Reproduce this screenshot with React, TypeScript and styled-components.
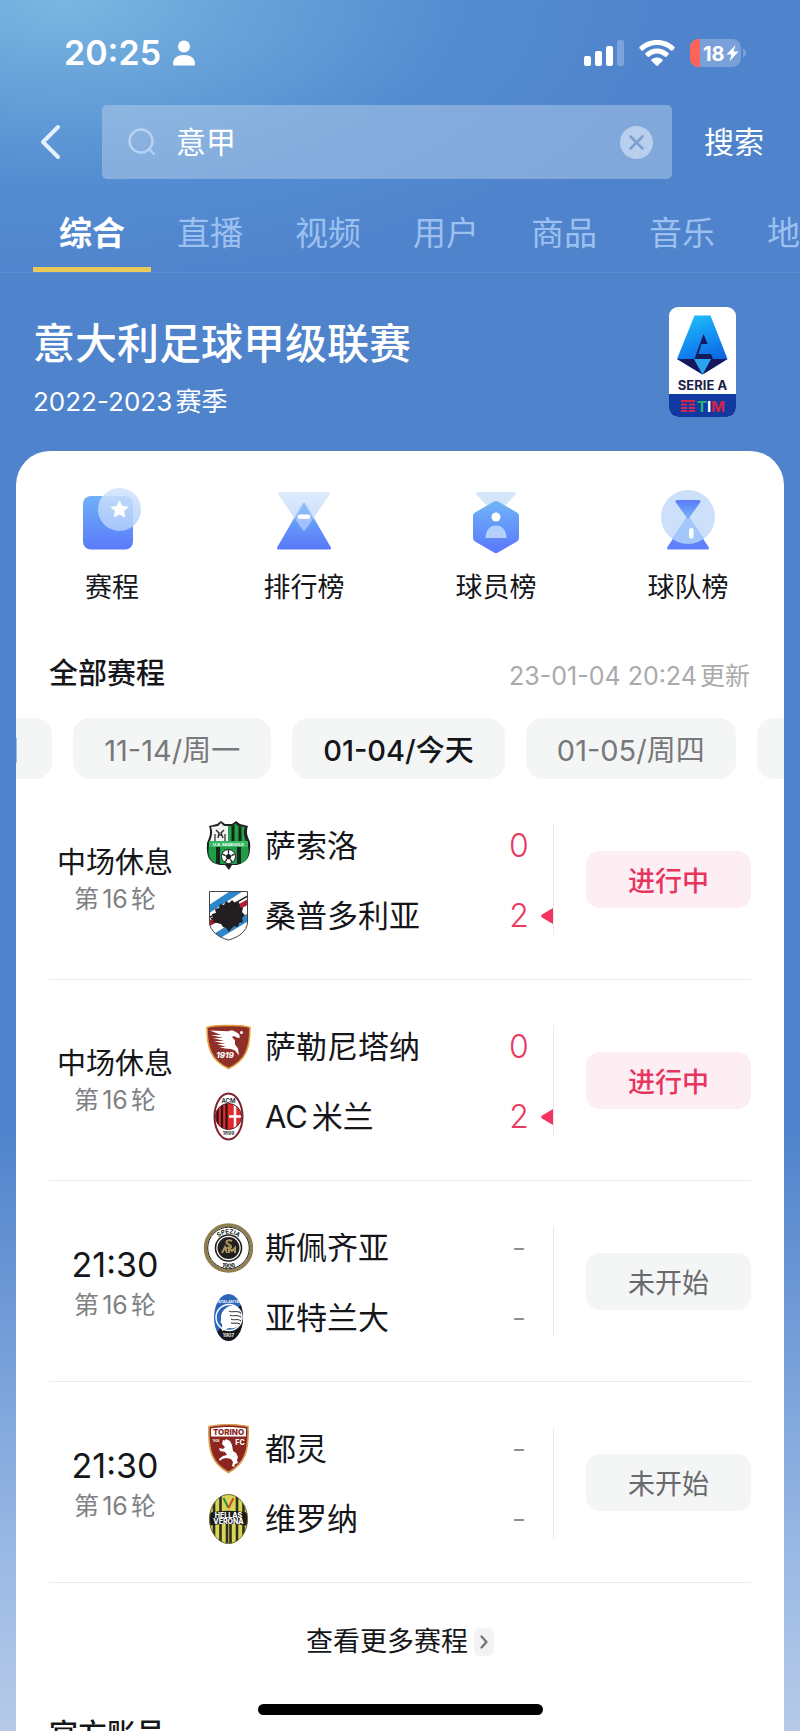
import React from "react";
import styled, { createGlobalStyle, css } from "styled-components";

const GlobalStyle = createGlobalStyle`
  *, *::before, *::after { box-sizing: border-box; }
  body {
    margin: 0;
    font-family: Inter, "Noto Sans CJK SC", sans-serif;
    color: #15161a;
    text-autospace: normal;
  }
  button, input {
    font: inherit;
    color: inherit;
    border: 0;
    padding: 0;
    background: none;
  }
  h1, h2, p, ul { margin: 0; padding: 0; }
  ul { list-style: none; }
  svg { display: block; flex: none; }
`;

const Screen = styled.div`
  position: relative;
  display: flex;
  flex-direction: column;
  height: 100vh;
  overflow: hidden;
  background:
    radial-gradient(ellipse 640px 300px at 8% 0, rgba(124, 186, 226, 0.95), rgba(116, 180, 224, 0.65) 28%, rgba(96, 160, 220, 0.3) 62%, rgba(79, 131, 204, 0) 100%),
    linear-gradient(180deg, #4f83cc 0%, #4f83cc 65%, #9dbbe5 91%, #b6cae8 100%);
`;

const StatusBar = styled.div`
  flex: none;
  display: flex;
  align-items: center;
  justify-content: space-between;
  height: 105px;
  padding: 0 54px 0 64px;
  color: #fff;
`;

const StatusGroup = styled.div<{ $gap: number }>`
  display: flex;
  align-items: center;
  gap: ${(p) => p.$gap}px;
`;

const Clock = styled.time`
  font-size: 34px;
  font-weight: 600;
  line-height: 40px;
`;

const SearchBar = styled.form`
  flex: none;
  display: flex;
  align-items: center;
  height: 74px;
  padding: 0 36px 0 32px;
  color: #fff;
`;

const BackButton = styled.button`
  width: 70px;
  padding-left: 8px;
`;

const SearchField = styled.label`
  flex: 1;
  min-width: 0;
  display: flex;
  align-items: center;
  gap: 20px;
  height: 100%;
  padding: 0 19px 0 26px;
  border-radius: 5px;
  background: rgba(190, 212, 235, 0.46);
`;

const SearchInput = styled.input`
  flex: 1;
  min-width: 0;
  font-size: 30px;
  line-height: 40px;
  outline: none;
`;

const SubmitButton = styled.button`
  margin-left: 32px;
  font-size: 30px;
  line-height: 40px;
`;

const Tabs = styled.nav`
  flex: none;
  display: flex;
  height: 94px;
  padding-left: 33px;
  overflow: hidden;
  border-bottom: 1px solid rgba(255, 255, 255, 0.08);
`;

const Tab = styled.a<{ $active?: boolean }>`
  flex: none;
  width: 118px;
  padding-top: 32px;
  font-size: 33px;
  line-height: 44px;
  text-align: center;
  text-decoration: none;
  color: #9cc0f0;
  ${(p) =>
    p.$active &&
    css`
      color: #fff;
      font-weight: 700;
      border-bottom: 5px solid #ebcb58;
    `}
`;

const Hero = styled.header`
  flex: none;
  display: flex;
  justify-content: space-between;
  padding: 34px 64px 34px 33px;
  color: #fff;
`;

const HeroText = styled.div`
  padding-top: 12px;
`;

const League = styled.h1`
  font-size: 42px;
  font-weight: 500;
  line-height: 50px;
`;

const Season = styled.p`
  margin-top: 18px;
  font-size: 26px;
  line-height: 30px;
`;

const Card = styled.main`
  flex: 1 0 auto;
  margin: 0 16px;
  border-radius: 34px 34px 0 0;
  background: #fff;
`;

const Entries = styled.nav`
  display: grid;
  grid-template-columns: repeat(4, 1fr);
  padding-top: 32px;
`;

const Entry = styled.a`
  display: flex;
  flex-direction: column;
  align-items: center;
  gap: 17px;
  font-size: 27px;
  line-height: 32px;
  color: inherit;
  text-decoration: none;
`;

const SectionHead = styled.div`
  display: flex;
  align-items: center;
  justify-content: space-between;
  margin-top: 50px;
  padding: 0 34px 0 33px;
`;

const SectionTitle = styled.h2`
  font-size: 29px;
  font-weight: 500;
  line-height: 40px;
`;

const Updated = styled.p`
  padding-top: 4px;
  font-size: 25px;
  line-height: 36px;
  color: #a9aaac;
`;

const Dates = styled.div`
  display: flex;
  justify-content: center;
  gap: 21px;
  margin-top: 24px;
  padding-left: 22px;
  overflow: hidden;
`;

const DateChip = styled.button<{ $active?: boolean }>`
  flex: none;
  height: 61px;
  padding: 0 31px 2px;
  border-radius: 17px;
  background: #f4f5f5;
  font-size: 29px;
  font-weight: ${(p) => (p.$active ? 500 : 400)};
  color: ${(p) => (p.$active ? "#15161a" : "#77787b")};
`;

const MatchList = styled.ul`
  padding: 0 33px;
`;

const MatchRow = styled.li`
  display: flex;
  align-items: center;
  height: 201px;
  border-bottom: 1px solid #ececed;
`;

const When = styled.div`
  flex: none;
  width: 132px;
  padding-top: 4px;
  text-align: center;
`;

const Phase = styled.p<{ $clock?: boolean }>`
  font-size: ${(p) => (p.$clock ? 34 : 29)}px;
  line-height: ${(p) => (p.$clock ? 44 : 36)}px;
`;

const Round = styled.p`
  font-size: 25px;
  line-height: 36px;
  color: #808184;
`;

const Teams = styled.div`
  flex: 1;
  min-width: 0;
  display: flex;
  flex-direction: column;
  gap: 20px;
  margin-left: 22px;
  padding-top: 3px;
`;

const TeamLine = styled.div`
  display: flex;
  align-items: center;
  height: 50px;
  gap: 12px;
`;

const TeamName = styled.span`
  flex: 1;
  font-size: 31px;
  line-height: 44px;
  white-space: nowrap;
`;

const Score = styled.span<{ $live: boolean }>`
  width: 20px;
  text-align: center;
  font-size: 32px;
  font-weight: 300;
  line-height: 44px;
  color: ${(p) => (p.$live ? "#ea3a61" : "#8d8e91")};
`;

const MarkerSlot = styled.span`
  width: 12px;
`;

const Rule = styled.span`
  flex: none;
  width: 1px;
  height: 111px;
  background: #ececed;
`;

const StatusButton = styled.button<{ $live: boolean }>`
  flex: none;
  width: 165px;
  height: 57px;
  margin-left: 32px;
  border-radius: 14px;
  font-size: 27px;
  font-weight: ${(p) => (p.$live ? 500 : 400)};
  color: ${(p) => (p.$live ? "#e8355d" : "#68696c")};
  background: ${(p) => (p.$live ? "#fdeef4" : "#f4f5f5")};
`;

const MoreLink = styled.a`
  display: flex;
  align-items: center;
  justify-content: center;
  gap: 6px;
  height: 118px;
  font-size: 27px;
  line-height: 36px;
  color: inherit;
  text-decoration: none;
`;

const MoreBadge = styled.span`
  display: grid;
  place-items: center;
  width: 20px;
  height: 28px;
  border-radius: 5px;
  background: #f3f3f4;
`;

const AccountsHead = styled.div`
  padding: 14px 33px 0;
`;

const HomeIndicator = styled.div`
  position: absolute;
  left: 50%;
  bottom: 16px;
  width: 285px;
  height: 11px;
  margin-left: -142px;
  border-radius: 6px;
  background: #000;
`;

/* ---------- icons ---------- */

const PersonIcon = () => (
  <svg width="24" height="26" viewBox="0 0 24 26" fill="#fff" aria-hidden="true">
    <circle cx="12" cy="6.5" r="6" />
    <path d="M1 24C1 18 5.5 15 12 15s11 3 11 9c0 1-.6 1.600-1.600 1.600H2.600C1.600 25.600 1 25 1 24z" />
  </svg>
);

const SignalIcon = () => (
  <svg width="40" height="26" viewBox="0 0 40 26" fill="#fff" aria-hidden="true">
    <rect x="0" y="16" width="7" height="10" rx="2" />
    <rect x="11" y="11" width="7" height="15" rx="2" />
    <rect x="22" y="6" width="7" height="20" rx="2" />
    <rect x="33" y="0" width="7" height="26" rx="2" opacity=".25" />
  </svg>
);

const WifiIcon = () => (
  <svg width="36" height="26" viewBox="0 0 36 26" fill="#fff" aria-hidden="true">
    <path d="M18 0C11 0 5 2.600.6 6.800c-.5.5-.5 1.100 0 1.600l2 2c.5.5 1 .5 1.500 0C7.800 7 12.700 5 18 5s10.200 2 13.900 5.400c.5.5 1 .5 1.500 0l2-2c.5-.5.5-1.100 0-1.600C31 2.600 25 0 18 0z" />
    <path d="M18 8.600c-4.600 0-8.600 1.800-11.500 4.500-.5.5-.5 1 0 1.500l2.200 2.200c.4.400 1 .4 1.400 0 2.100-1.900 4.800-3.200 7.900-3.200s5.800 1.300 7.900 3.200c.4.400 1 .4 1.400 0l2.200-2.200c.5-.5.5-1 0-1.500-2.900-2.700-6.900-4.500-11.500-4.500z" />
    <path d="M18 17.500c-2.200 0-4 .8-5.400 2-.5.5-.4 1 0 1.400l4.600 4.600c.5.500 1.100.5 1.600 0l4.600-4.600c.4-.4.5-.9 0-1.400-1.400-1.200-3.200-2-5.400-2z" />
  </svg>
);

const BatteryIcon = () => (
  <svg width="56" height="28" viewBox="0 0 56 28" role="img" aria-label="18%">
    <defs>
      <clipPath id="battery">
        <rect width="51" height="28" rx="8.500" />
      </clipPath>
    </defs>
    <rect width="51" height="28" rx="8.500" fill="#fff" fillOpacity=".24" />
    <rect width="10" height="28" fill="#fb6458" clipPath="url(#battery)" />
    <path d="M53 9.500c1.800.6 3 2.400 3 4.500s-1.200 3.900-3 4.500z" fill="#fff" fillOpacity=".24" />
    <text x="13" y="21.500" fontSize="20" fontWeight="700" fill="#fff">18</text>
    <path d="M45.500 6l-9 9.500h5l-2 7 9-10h-5z" fill="#fff" />
  </svg>
);

const BackIcon = () => (
  <svg width="22" height="36" viewBox="0 0 22 36" fill="none" stroke="#e6f1ff" strokeWidth="4" strokeLinecap="round" strokeLinejoin="round" aria-hidden="true">
    <path d="M18 3L3 18l15 15" />
  </svg>
);

const SearchIcon = () => (
  <svg width="28" height="28" viewBox="0 0 28 28" fill="none" stroke="#b7d2f2" strokeWidth="2.400" strokeLinecap="round" aria-hidden="true">
    <circle cx="13" cy="13" r="11.500" />
    <path d="M21.500 21.500L26 26" />
  </svg>
);

const ClearIcon = () => (
  <svg width="33" height="33" viewBox="0 0 33 33" aria-hidden="true">
    <circle cx="16.500" cy="16.500" r="16.500" fill="#b9cfee" />
    <path d="M10.500 10.500l12 12M22.500 10.500l-12 12" stroke="#7d9fcd" strokeWidth="2.600" strokeLinecap="round" />
  </svg>
);

const SerieALogo = () => (
  <svg width="67" height="110" viewBox="0 0 67 110" role="img" aria-label="Serie A TIM">
    <defs>
      <linearGradient id="saA" x1="0" y1="0" x2="0.300" y2="1">
        <stop offset="0" stopColor="#1fc4f7" />
        <stop offset=".5" stopColor="#1490f4" />
        <stop offset="1" stopColor="#0b5bdc" />
      </linearGradient>
      <clipPath id="saClip">
        <rect width="67" height="110" rx="9" />
      </clipPath>
    </defs>
    <g clipPath="url(#saClip)">
      <rect width="67" height="110" fill="#fff" />
      <rect y="87" width="67" height="23" fill="#12399f" />
      <path d="M25.500 8.500h16L58.500 52 33.500 67.500 8 52z" fill="url(#saA)" />
      <path d="M8 52h17l8.500 15.500z" fill="#17185c" />
      <path d="M58.500 52H42l-8.500 15.500z" fill="#17185c" />
      <path d="M25 52h17l-8.500 15.500z" fill="#2ba4ef" />
      <path d="M34.500 27l4 10h-6L29.500 47H42l2 5H25.500z" fill="#151a5e" />
      <text x="33.500" y="83" fontSize="13" fontWeight="700" textAnchor="middle" fill="#1b2049">SERIE A</text>
      <path d="M12 94h14M12 97.500h6M20 97.500h6M12 101h6M20 101h6M12 104h6M20 104h6" stroke="#d5244c" strokeWidth="1.800" />
      <text y="104.500" fontSize="15" fontWeight="700">
        <tspan x="28" fill="#1fb573">T</tspan>
        <tspan x="38" fill="#fff">I</tspan>
        <tspan x="42" fill="#d5244c">M</tspan>
      </text>
    </g>
  </svg>
);

const EntryDefs = () => (
  <svg width="0" height="0" style={{ position: "absolute" }} aria-hidden="true">
    <defs>
      <linearGradient id="eBlue" x1="0" y1="0" x2="0" y2="1">
        <stop offset="0" stopColor="#6fb0f8" />
        <stop offset="1" stopColor="#5a7bfa" />
      </linearGradient>
      <linearGradient id="ePale" x1="0" y1="0" x2="0" y2="1">
        <stop offset="0" stopColor="#cfe3fb" />
        <stop offset="1" stopColor="#b2cefb" />
      </linearGradient>
      <linearGradient id="eDark" x1="0" y1="0" x2="0" y2="1">
        <stop offset="0" stopColor="#5d80f8" />
        <stop offset="1" stopColor="#78aef8" />
      </linearGradient>
    </defs>
  </svg>
);

const ScheduleIcon = () => (
  <svg width="72" height="72" viewBox="0 0 72 72" aria-hidden="true">
    <rect x="7" y="13" width="50" height="53.500" rx="8" fill="url(#eBlue)" />
    <circle cx="43.500" cy="26.500" r="21.500" fill="url(#ePale)" fillOpacity=".85" />
    <path d="M43.500 18l2.500 5.400 5.800.7-4.300 4 1.200 5.800-5.200-2.900-5.200 2.900 1.200-5.800-4.300-4 5.800-.7z" fill="#fff" stroke="#fff" strokeWidth="1" strokeLinejoin="round" />
  </svg>
);

const RankingIcon = () => (
  <svg width="72" height="72" viewBox="0 0 72 72" strokeLinejoin="round" strokeWidth="3" aria-hidden="true">
    <path d="M36 21L61.500 65h-51z" fill="url(#eBlue)" stroke="url(#eBlue)" />
    <path d="M11.500 10.500h49L36 46.500z" fill="url(#ePale)" stroke="url(#ePale)" opacity=".72" />
    <path d="M36 19.500l9 16H27z" fill="#7fb0f8" opacity=".7" stroke="none" />
    <rect x="29.500" y="31.500" width="13" height="4.500" rx="2.200" fill="#fff" stroke="none" />
  </svg>
);

const PlayerIcon = () => (
  <svg width="72" height="72" viewBox="0 0 72 72" strokeLinejoin="round" aria-hidden="true">
    <path d="M17.500 10.500h37L36 30z" fill="#d5e5fa" stroke="#d5e5fa" strokeWidth="3" />
    <path d="M36 22l19 11v22L36 66 17 55V33z" fill="url(#eBlue)" stroke="url(#eBlue)" strokeWidth="8" />
    <circle cx="36" cy="34" r="4.500" fill="#fff" />
    <path d="M25.500 55c0-8 4.500-12.500 10.500-12.500S46.500 47 46.500 55z" fill="#b5cffc" />
  </svg>
);

const ClubIcon = () => (
  <svg width="72" height="72" viewBox="0 0 72 72" strokeLinejoin="round" strokeWidth="3" aria-hidden="true">
    <defs>
      <clipPath id="eClubDisc">
        <circle cx="36" cy="34" r="27" />
      </clipPath>
    </defs>
    <circle cx="36" cy="34" r="27" fill="#cde0fb" />
    <path d="M36 36l19.500 29h-39z" fill="#5f80fa" stroke="#5f80fa" />
    <path d="M36 32l23 34H13z" fill="#a3c6fb" clipPath="url(#eClubDisc)" stroke="none" />
    <path d="M25 18.500h22L36 34z" fill="url(#eDark)" stroke="url(#eDark)" />
    <rect x="37" y="45" width="4.500" height="10.500" rx="2.200" fill="#fff" stroke="none" />
  </svg>
);

const WinnerMarker = () => (
  <svg width="12" height="16" viewBox="0 0 12 16" role="img" aria-label="领先">
    <path d="M12 0v16L1 9.500C0 8.800 0 7.200 1 6.500z" fill="#f5325f" />
  </svg>
);

const ChevronIcon = () => (
  <svg width="8" height="14" viewBox="0 0 8 14" fill="none" stroke="#707174" strokeWidth="2.200" strokeLinecap="round" strokeLinejoin="round" aria-hidden="true">
    <path d="M1.500 1.500L6.500 7l-5 5.500" />
  </svg>
);

/* ---------- crests ---------- */

const Crest = ({ children }: { children: React.ReactNode }) => (
  <svg width="50" height="50" viewBox="0 0 50 50" aria-hidden="true">
    {children}
  </svg>
);

const Sassuolo = () => (
  <Crest>
    <defs>
      <clipPath id="sasTop">
        <path d="M8 6l7-1 3-3 3 3h8l3-3 3 3 7 1c-2 5-1 9 1 14H7C9 15 10 11 8 6z" />
      </clipPath>
      <clipPath id="sasLow">
        <path d="M6 25h39c2 10-1 16-9 18H15C7 41 4 35 6 25z" />
      </clipPath>
    </defs>
    <path d="M6 5l8-2 4-3 4 3h7l4-3 4 3 8 2c-2 6-1 9 2 16 1 14-2 20-13 23h-5l-3 5-4-5h-5C6 42 3 36 4 22c3-7 4-11 2-17z" fill="#1d211f" />
    <g clipPath="url(#sasTop)">
      <rect x="5" width="20" height="21" fill="#f2f3f2" />
      <rect x="25" width="22" height="21" fill="#24a148" />
      <path d="M30 0v21M37 0v21" stroke="#15271b" strokeWidth="3" />
      <path d="M12 20v-7M22 20v-7" stroke="#777" strokeWidth="2" />
      <path d="M13 9l3 3-1 5M21 9l-3 3 2 5M15 14h4" fill="none" stroke="#333" strokeWidth="1.500" />
    </g>
    <rect x="6" y="20" width="39" height="6" fill="#35b764" />
    <text x="25.500" y="24.500" fontSize="4" fontWeight="700" textAnchor="middle" fill="#fff">U.S. SASSUOLO</text>
    <g clipPath="url(#sasLow)">
      <rect x="4" y="26" width="43" height="19" fill="#1f9c46" />
      <path d="M15 26v19M36 26v19" stroke="#15271b" strokeWidth="4" />
    </g>
    <circle cx="25.500" cy="35.500" r="7" fill="#fff" stroke="#1d211f" />
    <path d="M25.500 32.500l3 2.200-1.200 3.600h-3.600l-1.200-3.600z" fill="#1d211f" />
    <path d="M25.500 32.500V29M28.500 34.700l3-1.500M27.300 38.300l2 3M23.700 38.300l-2 3M22.500 34.700l-3-1.500" stroke="#1d211f" strokeWidth="1.300" />
  </Crest>
);

const Sampdoria = () => (
  <Crest>
    <defs>
      <clipPath id="samp">
        <path d="M6.500.5h38V32c-1 8-8 14-19 17-11-3-18-9-19-17z" />
      </clipPath>
    </defs>
    <g clipPath="url(#samp)">
      <rect width="50" height="50" fill="#fff" />
      <path d="M0 22L46-8M4 51L52 22" stroke="#2d86c9" strokeWidth="7" />
      <path d="M0 36L50 8" stroke="#b01f2e" strokeWidth="5" />
      <path d="M0 30L50 2" stroke="#222" strokeWidth="1.500" />
    </g>
    <path d="M17 13l4 1 2-4 3 2 3-3 3 3 4-1 1 5 3 1-1 4 3 3-3 3 1 4-4 1-1 4-4-1-3 3-2 3-3-4-3-1-2-3-4-1-5-1 2-2-4-1 3-2-1-3 4-1-1-4 4-1z" fill="#231f20" />
    <path d="M6.500.5h38V32c-1 8-8 14-19 17-11-3-18-9-19-17z" fill="none" stroke="#444" />
  </Crest>
);

const Salernitana = () => (
  <Crest>
    <path d="M4 5.500C11 3 18 3.500 25.500 3.500S40 3 47 5.500c0 20-4 33-21.500 41C8 38.500 4 25.500 4 5.500z" fill="#8f2f2a" stroke="#e3a13c" strokeWidth="1.600" />
    <path d="M7 8.500l18 .8 4-1 3 1.200 4 2.500 1 3.500-2 .5-4-2-2 1 3 3.500v4l3 4 1 7-4-5-4-1.500-6-.5-6-1.500h7l-9-3h8l-11-3h10l-11-3h10L8 13h10z" fill="#fff" />
    <circle cx="38.500" cy="10.500" r="1.500" fill="#fff" />
    <text x="22" y="36" fontSize="8" fontWeight="800" fontStyle="italic" textAnchor="middle" fill="#fff">1919</text>
  </Crest>
);

const Milan = () => (
  <Crest>
    <defs>
      <clipPath id="mil">
        <circle cx="25.500" cy="24.500" r="13" />
      </clipPath>
    </defs>
    <ellipse cx="25.500" cy="24.500" rx="14" ry="23" fill="#fff" stroke="#7c2332" strokeWidth="2" />
    <text x="25.500" y="10.500" fontSize="6" fontWeight="600" textAnchor="middle" fill="#222">ACM</text>
    <text x="25.500" y="43" fontSize="5" fontWeight="600" textAnchor="middle" fill="#222">1899</text>
    <g clipPath="url(#mil)">
      <rect x="11" y="11" width="15" height="27" fill="#e02a2c" />
      <path d="M14.500 11v27M19 11v27M23.500 11v27" stroke="#241414" strokeWidth="2.200" />
      <rect x="26" y="11" width="14" height="27" fill="#e02a2c" />
      <path d="M32 11v27M26 24.500h14" stroke="#fff" strokeWidth="2.500" />
    </g>
    <circle cx="25.500" cy="24.500" r="13" fill="none" stroke="#5a1c26" />
  </Crest>
);

const Spezia = () => (
  <Crest>
    <defs>
      <path id="speTop" d="M11 25a14.500 14.500 0 0 1 29 0" />
      <path id="speLow" d="M5.500 25a20 20 0 0 0 40 0" />
    </defs>
    <circle cx="25.500" cy="25" r="23" fill="#fff" stroke="#8f7e4e" strokeWidth="3.500" />
    <circle cx="25.500" cy="25" r="20.800" fill="none" stroke="#231f20" />
    <circle cx="25.500" cy="25" r="13" fill="#fff" stroke="#231f20" strokeWidth="1.600" />
    <circle cx="25.500" cy="25" r="11" fill="#231f20" />
    <path d="M29 18c-4-2-8 1-4 3s5 4-2 4M19 30l3-6 2 6M26 30v-5l3 3 3-3v5" fill="none" stroke="#a8935a" strokeWidth="2" />
    <text fontSize="6" fontWeight="700" fill="#231f20" textAnchor="middle">
      <textPath href="#speTop" startOffset="50%">SPEZIA</textPath>
    </text>
    <text fontSize="6" fontWeight="700" fill="#231f20" textAnchor="middle">
      <textPath href="#speLow" startOffset="50%">1906</textPath>
    </text>
  </Crest>
);

const Atalanta = () => (
  <Crest>
    <defs>
      <clipPath id="ata">
        <ellipse cx="25.500" cy="24.500" rx="14.500" ry="23.500" />
      </clipPath>
    </defs>
    <g clipPath="url(#ata)">
      <rect width="50" height="50" fill="#2b66b8" />
      <path d="M41 8v42H10l5-12z" fill="#17181b" />
      <circle cx="26" cy="24.500" r="13" fill="#2b66b8" stroke="#fff" strokeWidth="1.500" />
      <path d="M22 16c4-4 10-4 13-1l3 7v8c-3 4-7 6-11 5-3 0-5 2-8 3-1-3 1-5 0-7-1-1-2-2-1-4 0-4 0-8 4-11z" fill="#fff" />
      <path d="M26 18c3 2 7-1 12 2M27 22c3 2 6-1 11 2M28 26c3 2 6-1 10 2M28 30c3 1 5-1 9 1" fill="none" stroke="#222" strokeWidth="1" />
    </g>
    <text x="25.500" y="9.500" fontSize="4" fontWeight="600" textAnchor="middle" fill="#fff">ATALANTA</text>
    <text x="25.500" y="43.500" fontSize="5" fontWeight="600" textAnchor="middle" fill="#fff">1907</text>
  </Crest>
);

const Torino = () => (
  <Crest>
    <path d="M6 2.500c6-1 13-2 19.500-2S39 1.500 45 2.500c1 24-3 37-19.500 46C9 39.500 5 26.500 6 2.500z" fill="#8c2420" stroke="#d79b52" strokeWidth="1.600" />
    <path d="M8 4.500c12-2 23-2 35 0v8H8z" fill="#fff" />
    <text x="25.500" y="11" fontSize="8" fontWeight="800" textAnchor="middle" fill="#8c2420">TORINO</text>
    <text x="37" y="21" fontSize="7" fontWeight="800" textAnchor="middle" fill="#fff">FC</text>
    <text x="13" y="18" fontSize="3" fontWeight="600" textAnchor="middle" fill="#fff">1906</text>
    <path d="M20 16l2 .5 1-1.500 4 2 2 4 1 6 3 2 2 4-1 3 1 3-3 1-1 3-2-1 1-4-2-3-5-1-4 1-2 2-1-2 4-3 4-1-2-3-5-1-1-3 4 1 2-2-3-3z" fill="#fff" />
  </Crest>
);

const Verona = () => (
  <Crest>
    <defs>
      <clipPath id="ver">
        <ellipse cx="25.500" cy="25" rx="19" ry="24.500" />
      </clipPath>
    </defs>
    <g clipPath="url(#ver)">
      <rect width="50" height="50" fill="#d9d455" />
      <path d="M11 0v50M17.500 0v50M24 20v30M27.500 20v30M34 0v50M40.500 0v50" stroke="#2b2d1e" strokeWidth="2.600" />
      <path d="M19 0h13l-3 14h-7z" fill="#d9d455" />
      <path d="M20.500 4l5 10" stroke="#2f8a42" strokeWidth="2" />
      <path d="M30.500 4l-5 10" stroke="#d24531" strokeWidth="2" />
      <path d="M5 19c14-3 27-3 41 0v13c-14-3-27-3-41 0z" fill="#1a1b17" />
    </g>
    <ellipse cx="25.500" cy="25" rx="19" ry="24.500" fill="none" stroke="#6b6a35" />
    <text x="25.500" y="23.500" fontSize="7" fontWeight="800" textAnchor="middle" fill="#fff">HELLAS</text>
    <text x="25.500" y="30" fontSize="7" fontWeight="800" textAnchor="middle" fill="#fff">VERONA</text>
  </Crest>
);

/* ---------- data ---------- */

const tabs = ["综合", "直播", "视频", "用户", "商品", "音乐", "地点"];

const entries = [
  { label: "赛程", Icon: ScheduleIcon },
  { label: "排行榜", Icon: RankingIcon },
  { label: "球员榜", Icon: PlayerIcon },
  { label: "球队榜", Icon: ClubIcon },
];

const dates = ["11-13/周日", "11-14/周一", "01-04/今天", "01-05/周四", "01-06/周五"];

interface Side {
  name: string;
  score?: number;
  Logo: () => React.JSX.Element;
}

interface Match {
  phase: string;
  live: boolean;
  home: Side;
  away: Side;
}

const matches: Match[] = [
  {
    phase: "中场休息",
    live: true,
    home: { name: "萨索洛", score: 0, Logo: Sassuolo },
    away: { name: "桑普多利亚", score: 2, Logo: Sampdoria },
  },
  {
    phase: "中场休息",
    live: true,
    home: { name: "萨勒尼塔纳", score: 0, Logo: Salernitana },
    away: { name: "AC米兰", score: 2, Logo: Milan },
  },
  {
    phase: "21:30",
    live: false,
    home: { name: "斯佩齐亚", Logo: Spezia },
    away: { name: "亚特兰大", Logo: Atalanta },
  },
  {
    phase: "21:30",
    live: false,
    home: { name: "都灵", Logo: Torino },
    away: { name: "维罗纳", Logo: Verona },
  },
];

const TeamEntry = ({ side, rival, live }: { side: Side; rival: Side; live: boolean }) => (
  <TeamLine>
    <side.Logo />
    <TeamName>{side.name}</TeamName>
    <Score $live={live}>{side.score ?? "-"}</Score>
    <MarkerSlot>{(side.score ?? 0) > (rival.score ?? 0) && <WinnerMarker />}</MarkerSlot>
  </TeamLine>
);

export default function App() {
  return (
    <>
      <GlobalStyle />
      <Screen>
        <StatusBar>
          <StatusGroup $gap={11}>
            <Clock>20:25</Clock>
            <PersonIcon />
          </StatusGroup>
          <StatusGroup $gap={15}>
            <SignalIcon />
            <WifiIcon />
            <BatteryIcon />
          </StatusGroup>
        </StatusBar>

        <SearchBar onSubmit={(e) => e.preventDefault()}>
          <BackButton type="button" aria-label="返回">
            <BackIcon />
          </BackButton>
          <SearchField>
            <SearchIcon />
            <SearchInput type="text" defaultValue="意甲" aria-label="搜索内容" />
            <button type="button" aria-label="清除">
              <ClearIcon />
            </button>
          </SearchField>
          <SubmitButton type="submit">搜索</SubmitButton>
        </SearchBar>

        <Tabs>
          {tabs.map((tab, i) => (
            <Tab key={tab} href="#" $active={i === 0}>
              {tab}
            </Tab>
          ))}
        </Tabs>

        <Hero>
          <HeroText>
            <League>意大利足球甲级联赛</League>
            <Season>2022-2023赛季</Season>
          </HeroText>
          <SerieALogo />
        </Hero>

        <Card>
          <EntryDefs />
          <Entries>
            {entries.map(({ label, Icon }) => (
              <Entry key={label} href="#">
                <Icon />
                {label}
              </Entry>
            ))}
          </Entries>

          <SectionHead>
            <SectionTitle>全部赛程</SectionTitle>
            <Updated>23-01-04 20:24更新</Updated>
          </SectionHead>

          <Dates>
            {dates.map((date, i) => (
              <DateChip key={date} type="button" $active={i === 2}>
                {date}
              </DateChip>
            ))}
          </Dates>

          <MatchList>
            {matches.map((m) => (
              <MatchRow key={m.home.name}>
                <When>
                  <Phase $clock={!m.live}>{m.phase}</Phase>
                  <Round>第16轮</Round>
                </When>
                <Teams>
                  <TeamEntry side={m.home} rival={m.away} live={m.live} />
                  <TeamEntry side={m.away} rival={m.home} live={m.live} />
                </Teams>
                <Rule />
                <StatusButton type="button" $live={m.live}>
                  {m.live ? "进行中" : "未开始"}
                </StatusButton>
              </MatchRow>
            ))}
          </MatchList>

          <MoreLink href="#">
            查看更多赛程
            <MoreBadge>
              <ChevronIcon />
            </MoreBadge>
          </MoreLink>

          <AccountsHead>
            <SectionTitle>官方账号</SectionTitle>
          </AccountsHead>
        </Card>
        <HomeIndicator />
      </Screen>
    </>
  );
}
